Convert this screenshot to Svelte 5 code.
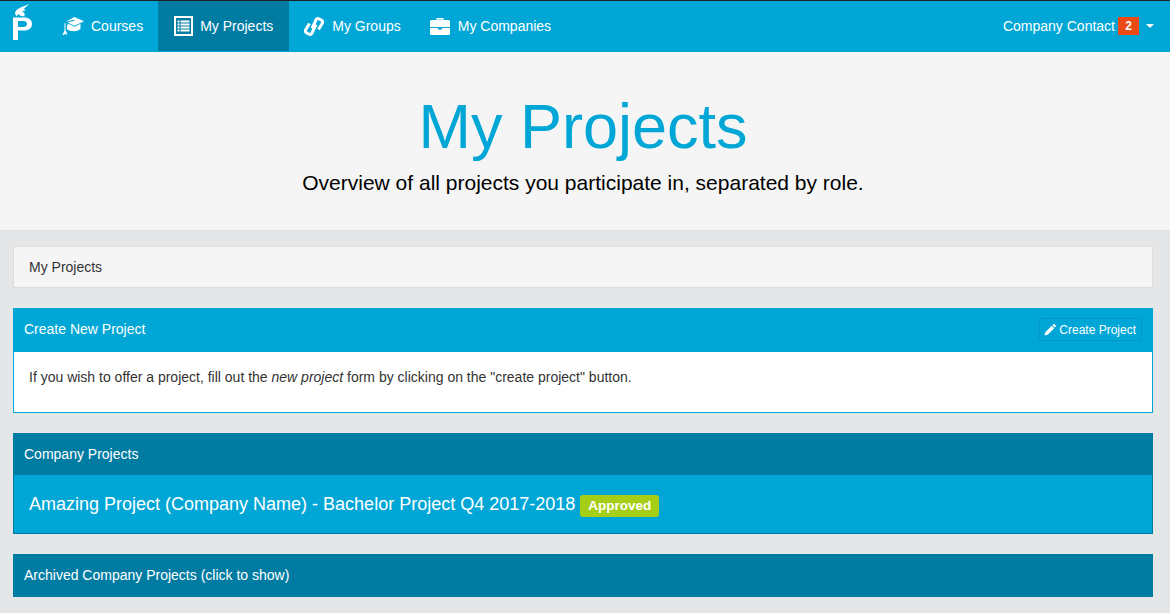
<script>
  const panelText = "Amazing Project (Company Name) - Bachelor Project Q4 2017-2018";
</script>

<nav class="navbar">
  <a class="brand" href="#home" aria-label="Home">
    <svg width="22" height="40" viewBox="0 0 22 40">
      <path fill-rule="evenodd" d="M1 15.500h11c5 0 8 2.500 8 6.500s-3 6.500-8 6.500H6V38H1zM6 19v6h5.500c2 0 3.500-1 3.500-3s-1.500-3-3.500-3z" fill="#fff"/>
      <path d="M17.500 2 8.500 5.500C4.500 7.500 2.500 10 3 12L5 14.500 6 12 9 14 12.500 14.500V11L10 9.500 14 8 11.500 7z" fill="#fff"/>
    </svg>
  </a>
  <ul class="nav">
    <li class="courses">
      <a href="#courses">
        <svg width="22" height="18" viewBox="0 0 22 18">
          <path d="M12.500 0 22 4.300l-9.500 4.400-7-3.200 7.200-1.700-.4-1-8.600 2z" fill="#fff"/>
          <path d="M5 8.300V12c2.500 3 11 3 13.500-.3V6.800l-6 2.900-6-2.900z" fill="#fff"/>
          <path d="M2.500 6.500v6.800L.5 18h1.800l.9-2 .6 1.600h1.700l-2-4.300V6z" fill="#fff"/>
        </svg>
        Courses
      </a>
    </li>
    <li class="active">
      <a href="#projects">
        <svg class="shift" width="19" height="20" viewBox="0 0 19 20">
          <rect x="1" y="1" width="17" height="18" fill="none" stroke="#fff" stroke-width="2"/>
          <path d="M3.500 4.500h2v2h-2zM6.500 4.500h9v2h-9zM3.500 7.500h2v2h-2zM6.500 7.500h9v2h-9zM3.500 10.500h2v2h-2zM6.500 10.500h9v2h-9zM3.500 13.500h2v2h-2zM6.500 13.500h9v2h-9z" fill="#fff"/>
        </svg>
        My Projects
      </a>
    </li>
    <li class="groups">
      <a href="#groups">
        <svg width="20" height="21" viewBox="0 0 20 21">
          <g fill="none" stroke="#fff" stroke-width="3">
            <path d="M8 12.500 12 4Q13 1.800 15 2.800L17.500 4.200Q19.500 5.300 18.300 7.300L14.500 13.500"/>
            <path d="M12 8.500 8 17Q7 19.200 5 18.200L2.500 16.800Q.5 15.700 1.700 13.700L5.500 7.500"/>
          </g>
        </svg>
        My Groups
      </a>
    </li>
    <li>
      <a href="#companies">
        <svg width="20" height="18" viewBox="0 0 20 18">
          <path d="M6.500 3V1h7v2h-1.500V2.400H8V3z" fill="#fff"/>
          <path d="M0 4.500A1.500 1.500 0 0 1 1.500 3h17A1.500 1.500 0 0 1 20 4.500V10H0zM0 11h8v1.500h4V11h8v5.500a1.500 1.500 0 0 1-1.500 1.500h-17A1.500 1.500 0 0 1 0 16.500z" fill="#fff"/>
        </svg>
        My Companies
      </a>
    </li>
  </ul>
  <a class="user" href="#user">
    Company Contact
    <span class="badge">2</span>
    <span class="caret"></span>
  </a>
</nav>

<header class="jumbotron">
  <h1>My Projects</h1>
  <p>Overview of all projects you participate in, separated by role.</p>
</header>

<main class="container">
  <div class="breadcrumb">My Projects</div>

  <section class="panel primary">
    <div class="panel-heading">
      <span>Create New Project</span>
      <a class="btn" href="#create">
        <svg width="13" height="13" viewBox="0 0 12 12">
          <path d="M9.200.6 11.400 2.800 10 4.200 7.800 2zM7.200 2.600l2.200 2.200L3.400 10.800.4 11.600l.8-3z" fill="#fff"/>
        </svg>
        Create Project
      </a>
    </div>
    <div class="panel-body">
      If you wish to offer a project, fill out the <em>new project</em> form by clicking on the "create project" button.
    </div>
  </section>

  <section class="panel dark">
    <div class="panel-heading">Company Projects</div>
    <a class="project" href="#project">
      {panelText}
      <span class="label">Approved</span>
    </a>
  </section>

  <section class="panel dark last">
    <div class="panel-heading">Archived Company Projects (click to show)</div>
  </section>
</main>

<style>
  :global(body) {
    background: #e5e6e8;
    font-family: "Liberation Sans", Arial, sans-serif;
    font-size: 14px;
    line-height: 20px;
    color: #333;
  }

  a {
    color: inherit;
    text-decoration: none;
  }

  .navbar {
    display: flex;
    align-items: stretch;
    height: 51px;
    background: #00a7d6;
    border-top: 1px solid #1b2227;
    color: #fff;
  }

  .brand {
    display: block;
    width: 47px;
    box-sizing: border-box;
    padding: 1px 0 0 12px;
  }

  .nav {
    display: flex;
    flex: 1;
    margin: 0;
    padding: 0;
    list-style: none;
  }

  .nav li a {
    display: flex;
    align-items: center;
    gap: 8px;
    height: 50px;
    padding: 0 15px;
  }

  .nav li.courses a {
    gap: 7px;
  }

  .nav li.groups a {
    padding-right: 14px;
  }

  .nav li.active a {
    gap: 7px;
    padding-right: 16px;
    background: #007ca3;
  }

  .nav .shift {
    margin-left: 1px;
  }

  .user {
    display: flex;
    align-items: center;
    height: 50px;
    padding-right: 16px;
    color: #fff;
  }

  .badge {
    width: 21px;
    height: 18px;
    margin-left: 3px;
    background: #e94a16;
    color: #fff;
    font-size: 12px;
    font-weight: bold;
    line-height: 18px;
    text-align: center;
  }

  .caret {
    width: 0;
    height: 0;
    margin-left: 7px;
    border-top: 4px solid #fff;
    border-left: 4px solid transparent;
    border-right: 4px solid transparent;
  }

  .jumbotron {
    box-sizing: border-box;
    height: 179px;
    padding: 36px 4px 0 0;
    background: #f5f5f5;
    border-bottom: 1px solid #dfdfe0;
    text-align: center;
  }

  .jumbotron h1 {
    margin: 0;
    color: #00a7d6;
    font-size: 63px;
    font-weight: normal;
    line-height: 77px;
  }

  .jumbotron p {
    margin: 3px 0 0;
    color: #000;
    font-size: 21px;
    line-height: 30px;
  }

  .container {
    padding: 15px 17px 0 13px;
  }

  .breadcrumb {
    box-sizing: border-box;
    height: 42px;
    margin-bottom: 20px;
    padding: 10px 15px;
    background: #f5f5f5;
    border: 1px solid #dcdcdc;
  }

  .panel {
    margin-bottom: 20px;
    border: 1px solid transparent;
  }

  .panel.primary {
    background: #fff;
    border-color: #00a7d6;
  }

  .panel.dark {
    background: #00a7d6;
    border-color: #007ca3;
  }

  .panel.last {
    margin-bottom: 0;
  }

  .panel-heading {
    display: flex;
    align-items: center;
    justify-content: space-between;
    padding: 0 10px;
    color: #fff;
  }

  .primary .panel-heading {
    height: 43px;
    box-sizing: border-box;
    padding-bottom: 2px;
    background: #00a7d6;
  }

  .primary .panel-heading span {
    position: relative;
    top: -1px;
  }

  .dark .panel-heading {
    height: 41px;
    box-sizing: border-box;
    padding-bottom: 2px;
    background: #007ca3;
  }

  .btn {
    display: flex;
    align-items: center;
    gap: 2px;
    height: 23px;
    box-sizing: border-box;
    padding: 0 5px 0 4px;
    border: 1px solid #0097c2;
    border-radius: 2px;
    color: #fff;
    font-size: 12px;
  }

  .panel-body {
    height: 60px;
    box-sizing: border-box;
    padding: 15px;
    color: #333;
  }

  .project {
    display: block;
    height: 58px;
    box-sizing: border-box;
    padding: 16px 15px 15px;
    color: #fff;
    font-size: 18px;
    line-height: 27px;
  }

  .label {
    display: inline-block;
    padding: 0 8px;
    background: #a6ce16;
    border-radius: 3px;
    color: #fff;
    font-size: 13.500px;
    font-weight: bold;
    line-height: 22px;
  }
</style>
